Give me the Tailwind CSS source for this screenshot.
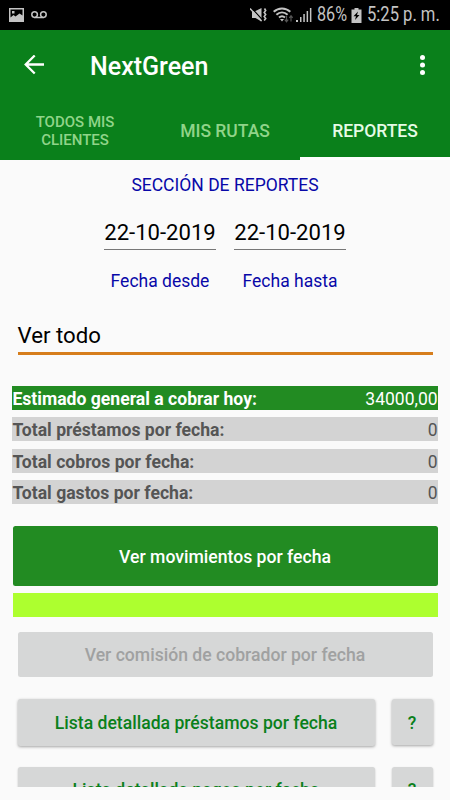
<!DOCTYPE html>
<html lang="es">
<head>
    <meta charset="UTF-8"/>
    <meta name="viewport" content="width=device-width, initial-scale=1.0"/>
    <title>NextGreen - Reportes</title>
    <script src="https://cdn.jsdelivr.net/npm/@tailwindcss/browser@4"></script>
</head>
<body class="bg-[#fafafa] font-['Roboto',sans-serif] text-[17.5px] leading-[24px] h-[800px] overflow-hidden flex flex-col">

<!-- Barra de estado -->
<div class="bg-black h-[30px] shrink-0 flex items-center justify-between text-[#c4c4c4] pl-[9px] pr-[10px]">
    <div class="flex items-center gap-[7px]">
        <svg class="w-[15px] h-[14px]" viewBox="0 0 15 14" fill="currentColor">
            <path fill-rule="evenodd" d="M0 0h15v14H0zM1.5 1.5v8l3-2.5 2 1.5 4-3 3 2v-6zM3 3h2.5v2.5H3z"/>
        </svg>
        <svg class="w-[16px] h-[8px]" viewBox="0 0 16 8" fill="none" stroke="currentColor" stroke-width="1.5">
            <circle cx="3.6" cy="3.6" r="2.8"/>
            <circle cx="12.4" cy="3.6" r="2.8"/>
            <path d="M3.6 6.5h8.8"/>
        </svg>
    </div>
    <div class="flex items-center">
        <svg class="w-[17px] h-[16px] mr-[6px]" viewBox="0 0 17 16" fill="currentColor">
            <path d="M2 4h3.500L11.500 1v13.500L5.500 11H2z"/>
            <path d="M1.500 1L12.500 13" stroke="#000" stroke-width="1.200"/>
            <path d="M0 1.500L11.500 14" stroke="currentColor" stroke-width="1.500"/>
            <path d="M14.500 1.500l1.200 2-1.500 2 1.500 2-1.500 2 1.500 2-1.500 2" fill="none" stroke="currentColor" stroke-width="1.600"/>
        </svg>
        <svg class="w-[20px] h-[16px] mr-[3px]" viewBox="0 0 20 16" fill="none" stroke="currentColor" stroke-width="2">
            <path d="M.7 4.700C5.500.3 12.500.3 17.300 4.700M3.400 7.700c3.300-3 7.900-3 11.200 0M6 10.600c1.800-1.600 4.200-1.600 6 0"/>
            <path d="M7 12h4l-2 2.500z" fill="currentColor" stroke="none"/>
            <path d="M13.500 9v5.500m-1.700-1.800l1.700 2 1.700-2M18 14.500V9m-1.700 1.800l1.700-2 1.700 2" stroke="#555" stroke-width="1.200"/>
        </svg>
        <svg class="w-[16px] h-[16px] mr-[5px]" viewBox="0 0 16 16" fill="currentColor">
            <path d="M0 13h2v2H0zM4 10h1.500v5H4zM7.300 7h1.500v8H7.300zM10.600 4h1.500v11h-1.500zM13.900 1h1.500v14h-1.500z"/>
        </svg>
        <div class="w-[30px] mr-[4px] whitespace-nowrap"><span class="inline-block origin-left scale-x-[.83] text-[19.5px]">86%</span></div>
        <svg class="w-[11px] h-[15px] mr-[5px]" viewBox="0 0 10 15" fill="currentColor">
            <path d="M3 0h4v1.500h3V15H0V1.500h3z"/>
            <path d="M6.500 3.500L2 8.300h2.500L3.500 12 8 7H5.500z" fill="#000"/>
        </svg>
        <div class="w-[73px] whitespace-nowrap"><span class="inline-block origin-left scale-x-[.85] text-[19.5px]">5:25 p. m.</span></div>
    </div>
</div>

<!-- Encabezado -->
<header class="bg-[#0a801b] text-white h-[130px] shrink-0 flex flex-col">
    <div class="h-[70px] flex items-center pl-[24px] pr-[25px]">
        <svg class="w-[20px] h-[20px]" viewBox="0 0 20 20" fill="none" stroke="currentColor" stroke-width="2.300">
            <path d="M20 9.500H2M10.700.5L1.700 9.500l9 9"/>
        </svg>
        <h1 class="ml-[46px] mt-[3px] text-[25px] leading-[30px] font-medium">NextGreen</h1>
        <svg class="ml-auto w-[5px] h-[20px]" viewBox="0 0 5 20" fill="currentColor">
            <circle cx="2.500" cy="2.500" r="2.500"/>
            <circle cx="2.500" cy="10" r="2.500"/>
            <circle cx="2.500" cy="17.500" r="2.500"/>
        </svg>
    </div>
    <nav class="grid grid-cols-3 h-[60px] text-center font-medium">
        <a class="flex items-center justify-center pt-[2px] text-[15px] leading-[18px] text-[#90d489]">TODOS MIS<br/>CLIENTES</a>
        <a class="flex items-center justify-center pt-[2px] text-[#90d489]">MIS RUTAS</a>
        <a class="flex items-center justify-center border-b-[3px] border-white pt-[5px] text-[#e6fbe6]">REPORTES</a>
    </nav>
</header>

<main class="h-[627px] overflow-hidden">
    <h2 class="mt-[13px] text-center text-[#0808a8]">SECCIÓN DE REPORTES</h2>

    <div class="mt-[23px] flex justify-center gap-[18px] whitespace-nowrap">
        <div class="w-[112px]">
            <div class="flex h-[30px] justify-center border-b border-[#777] text-[22.1px] leading-[25px] text-black">22-10-2019</div>
            <div class="mt-[19px] text-center text-[#0808a8]">Fecha desde</div>
        </div>
        <div class="w-[112px]">
            <div class="flex h-[30px] justify-center border-b border-[#777] text-[22.1px] leading-[25px] text-black">22-10-2019</div>
            <div class="mt-[19px] text-center text-[#0808a8]">Fecha hasta</div>
        </div>
    </div>

    <div class="mx-[17.5px] mt-[29px] h-[33px] border-b-[3px] border-[#d67d1c] text-[22.2px] leading-[27px] text-black">Ver todo</div>

    <!-- Totales -->
    <div class="mx-[12.4px] mt-[31px] flex flex-col gap-[7.3px] leading-[26px] text-[#555]">
        <div class="flex h-[24px] justify-between bg-[#228b22] text-white">
            <b class="text-[17.6px]">Estimado general a cobrar hoy:</b><span>34000,00</span>
        </div>
        <div class="flex h-[24px] justify-between bg-[#d3d3d3]">
            <b class="text-[17.6px]">Total préstamos por fecha:</b><span>0</span>
        </div>
        <div class="flex h-[24px] justify-between bg-[#d3d3d3]">
            <b class="text-[17.6px]">Total cobros por fecha:</b><span>0</span>
        </div>
        <div class="flex h-[24px] justify-between bg-[#d3d3d3]">
            <b class="text-[17.6px]">Total gastos por fecha:</b><span>0</span>
        </div>
    </div>

    <div class="mx-[12.5px] mt-[22px] flex flex-col text-[17.6px] font-medium">
        <button class="h-[60px] rounded-[2.500px] bg-[#228b22] pt-[2px] text-white">Ver movimientos por fecha</button>
        <div class="mt-[7px] h-[24px] bg-[#adff2f]"></div>
    </div>

    <div class="mx-[17.5px] mt-[15px] flex flex-col text-[17.6px] font-medium text-[#0a801b]">
        <button class="h-[45px] rounded-[2.500px] bg-[#d6d7d7] pt-[2px] text-[#a0a1a1]">Ver comisión de cobrador por fecha</button>
        <div class="mt-[22px] flex gap-[17px]">
            <button class="h-[47px] flex-1 rounded-[2.500px] bg-[#d6d7d7] pt-[2px] shadow-[0_1px_3px_rgba(0,0,0,0.35)]">Lista detallada préstamos por fecha</button>
            <button class="h-[46px] w-[41px] rounded-[2.500px] bg-[#d6d7d7] pt-[2px] shadow-[0_1px_3px_rgba(0,0,0,0.35)]">?</button>
        </div>
        <div class="mt-[21px] flex gap-[17px]">
            <button class="h-[47px] flex-1 rounded-[2.500px] bg-[#d6d7d7] shadow-[0_1px_2px_rgba(0,0,0,0.25)]">Lista detallada pagos por fecha</button>
            <button class="h-[47px] w-[41px] rounded-[2.500px] bg-[#d6d7d7] shadow-[0_1px_2px_rgba(0,0,0,0.25)]">?</button>
        </div>
    </div>
</main>

</body>
</html>
